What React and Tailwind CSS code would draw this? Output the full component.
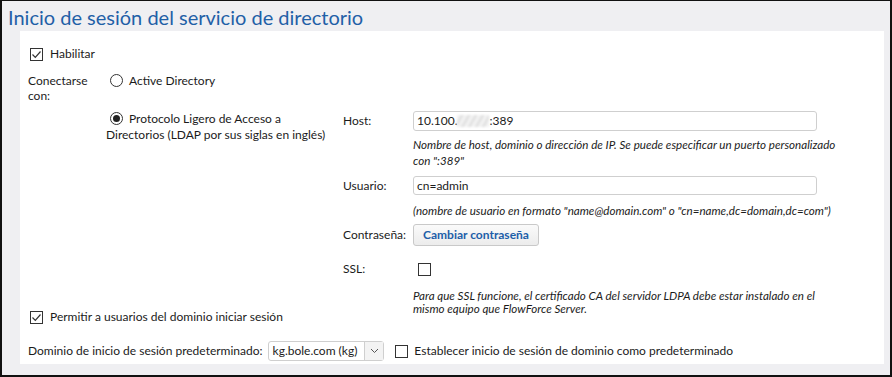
import React from "react";

const font = { fontFamily: "Lato, 'Noto Sans', sans-serif" };

const Check = ({ checked }) => (
  <span className="inline-flex items-center justify-center w-[13px] h-[13px] border border-[#333] bg-white shrink-0">
    {checked && (
      <svg width="11" height="11" viewBox="0 0 11 11">
        <path d="M1.5 5.5 L4.3 8.3 L9.5 2.5" fill="none" stroke="#333" strokeWidth="1.2" />
      </svg>
    )}
  </span>
);

const Radio = ({ checked }) => (
  <span className="inline-flex items-center justify-center w-[13px] h-[13px] rounded-full border border-[#333] bg-white shrink-0">
    {checked && <span className="w-[7px] h-[7px] rounded-full bg-[#222]" />}
  </span>
);

const App = () => {
  return (
    <div
      className="w-[892px] h-[377px] bg-[#efeff2] border-2 border-t border-[#111] text-[12px] text-[#1b1b1b] overflow-hidden"
      style={font}
    >
      {/* TITLE */}
      <h1 className="text-[20px] leading-[28px] text-[#1f60a7] pl-[6px] pt-[2px] h-[30px]">
        Inicio de sesión del servicio de directorio
      </h1>

      {/* PANEL */}
      <div className="ml-[18px] mr-[6px] bg-white h-[333px] pl-[8px] pt-[16px]">
        {/* HABILITAR */}
        <label className="flex items-center gap-[7px] ml-[2px] h-[14px]">
          <Check checked />
          <span>Habilitar</span>
        </label>

        {/* CONECTARSE */}
        <div className="flex mt-[12px]">
          <div className="w-[78px] leading-[15px]">
            Conectarse
            <br />
            con:
          </div>
          <div className="flex items-center gap-[6px] ml-[4px] h-[15px]">
            <Radio />
            <span>Active Directory</span>
          </div>
        </div>

        {/* LDAP BLOCK */}
        <div className="flex mt-[8px]">
          <div className="w-[237px] ml-[78px] leading-[16px]">
            <span className="inline-flex align-middle ml-[4px] mr-[6px] -mt-[2px]">
              <Radio checked />
            </span>
            Protocolo Ligero de Acceso a
            <br />
            Directorios (LDAP por sus siglas en inglés)
          </div>

          <div className="grid grid-cols-[70px_1fr] items-center">
            {/* HOST */}
            <div>Host:</div>
            <div className="w-[404px] h-[20px] border border-[#cfcfcf] rounded-[3px] flex items-center px-[3px]">
              <span>10.100.</span>
              <span className="w-[32px] h-[12px] bg-[repeating-linear-gradient(120deg,#f2f2f2_0px,#f2f2f2_3px,#dcdcdc_4px,#e8e8e8_6px)] blur-[1px]" />
              <span>:389</span>
            </div>
            <div />
            <div className="italic text-[11.6px] leading-[16px] pt-[6px] pb-[7px]">
              Nombre de host, dominio o dirección de IP. Se puede especificar un puerto personalizado
              <br />
              con ":389"
            </div>

            {/* USUARIO */}
            <div>Usuario:</div>
            <div className="w-[404px] h-[19px] border border-[#cfcfcf] rounded-[3px] flex items-center px-[3px]">
              cn=admin
            </div>
            <div />
            <div className="italic text-[11.6px] leading-[16px] pt-[8px] pb-[5px]">
              (nombre de usuario en formato "name@domain.com" o "cn=name,dc=domain,dc=com")
            </div>

            {/* CONTRASEÑA */}
            <div>Contraseña:</div>
            <div>
              <button className="h-[22px] px-[9px] border border-[#c9c9c9] rounded-[3px] bg-gradient-to-b from-[#fafafa] to-[#ececec] text-[#1d5ea8] font-bold text-[12px]">
                Cambiar contraseña
              </button>
            </div>

            {/* SSL */}
            <div className="mt-[14px]">SSL:</div>
            <div className="mt-[14px] pl-[5px] h-[13px] flex items-center">
              <Check />
            </div>
            <div />
            <div className="italic text-[11.6px] leading-[13px] pt-[11px]">
              Para que SSL funcione, el certificado CA del servidor LDPA debe estar instalado en el
              <br />
              mismo equipo que FlowForce Server.
            </div>
          </div>
        </div>

        {/* PERMITIR */}
        <label className="flex items-center gap-[7px] ml-[2px] h-[14px] -mt-[5px]">
          <Check checked />
          <span>Permitir a usuarios del dominio iniciar sesión</span>
        </label>

        {/* DOMINIO */}
        <div className="flex items-center mt-[17px] h-[20px]">
          <span>Dominio de inicio de sesión predeterminado:</span>
          <div className="ml-[5px] flex items-center h-[20px] border border-[#cfcfcf] rounded-[3px]">
            <span className="pl-[4px] pr-[7px]">kg.bole.com (kg)</span>
            <span className="w-[19px] h-[18px] border-l border-[#cfcfcf] bg-[#f3f3f3] flex items-center justify-center">
              <svg width="9" height="6" viewBox="0 0 9 6">
                <path d="M1 1 L4.5 4.5 L8 1" fill="none" stroke="#555" strokeWidth="1" />
              </svg>
            </span>
          </div>
          <label className="flex items-center gap-[6px] ml-[11px]">
            <Check />
            <span>Establecer inicio de sesión de dominio como predeterminado</span>
          </label>
        </div>
      </div>
    </div>
  );
};

export default App;
